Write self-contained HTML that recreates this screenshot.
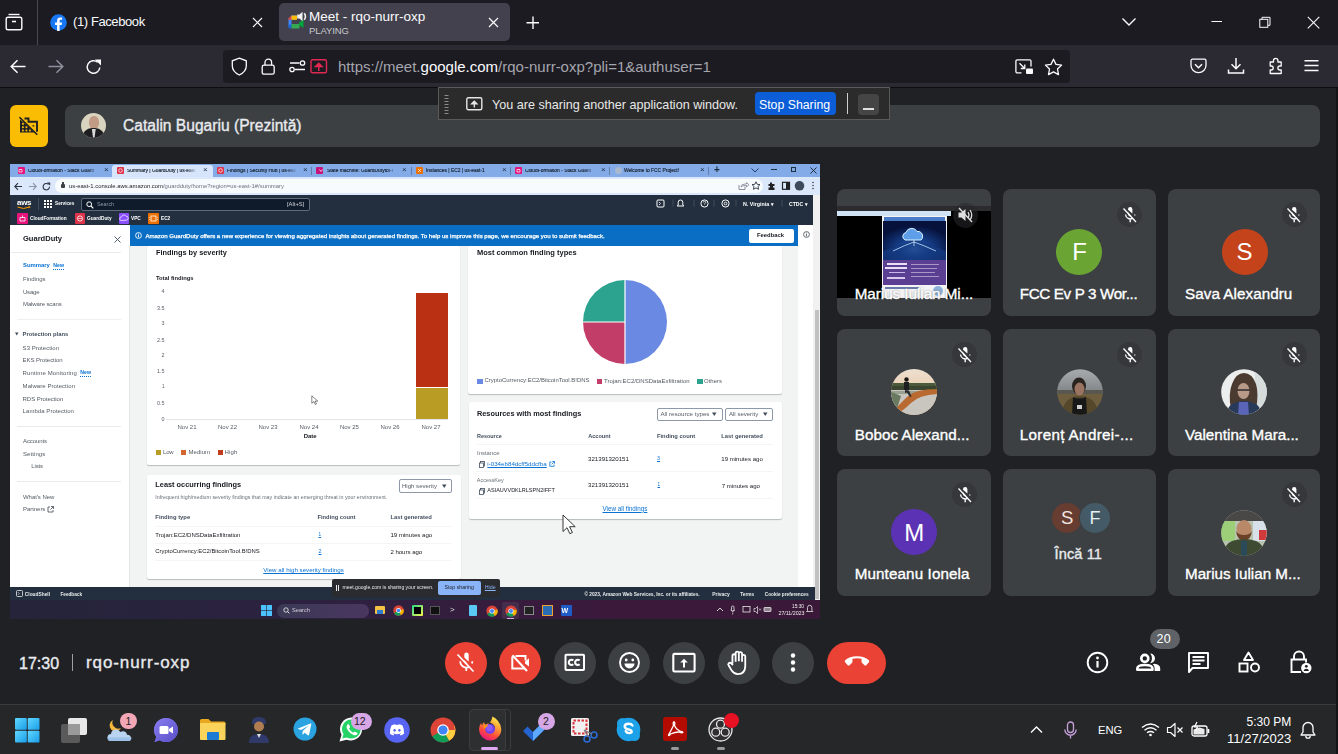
<!DOCTYPE html>
<html><head><meta charset="utf-8">
<style>
*{margin:0;padding:0;box-sizing:border-box}
html,body{width:1338px;height:754px;overflow:hidden;background:#202124;font-family:"Liberation Sans",sans-serif}
.a{position:absolute}
svg{position:absolute;overflow:visible}
/* firefox chrome */
#tabs{left:0;top:0;width:1338px;height:45px;background:#1c1b22}
#tb{left:0;top:45px;width:1338px;height:42px;background:#2b2a33}
#tbline{left:0;top:87px;width:1338px;height:1px;background:#0e0e10}
#url{left:223px;top:50px;width:847px;height:33px;background:#1c1b22;border-radius:4px}
/* meet */
#meet{left:0;top:88px;width:1338px;height:616px;background:#202124}
.tile{background:#3c4043;border-radius:8px}
#taskbar{left:0;top:704px;width:1338px;height:50px;background:#252729}

.t{position:absolute;white-space:nowrap;line-height:1}
.dk{color:#16191f}
.gy{color:#545b64}
.lk{color:#0972d3;text-decoration:underline}
.ctab{position:absolute;top:164px;height:13px}
</style></head><body>
<div id="tabs" class="a"></div>
<div id="tb" class="a"></div>
<div id="tbline" class="a"></div>
<div id="url" class="a"></div>
<div id="meet" class="a"></div>

<!-- FIREFOX CHROME -->
<svg style="left:0;top:0" width="40" height="45"><g fill="none" stroke="#fbfbfe" stroke-width="1.4"><rect x="6.2" y="17.2" width="15.6" height="12.6" rx="1.8"/><path d="M8.5 14.5h11"/><path d="M12 21.5h4" stroke-width="1.6"/></g></svg>
<div class="a" style="left:37px;top:0;width:1px;height:45px;background:#4a4950"></div>
<svg style="left:50px;top:14px" width="17" height="17"><circle cx="8.5" cy="8.5" r="8.3" fill="#1877f2"/><path d="M9.6 17V10.9h2.1l.35-2.5H9.6V6.9c0-.7.3-1.2 1.3-1.2h1.2V3.5c-.3 0-1-.1-1.9-.1-1.9 0-3.1 1.1-3.1 3.2v1.8H5.1v2.5h2v6.1z" fill="#fff"/></svg>
<div class="a" style="left:73px;top:14px;font-size:13px;letter-spacing:-0.4px;color:#fbfbfe;white-space:nowrap;line-height:16px">(1) Facebook</div>
<svg style="left:252px;top:17px" width="11" height="11"><path d="M1 1l9 9M10 1l-9 9" stroke="#fbfbfe" stroke-width="1.2"/></svg>
<div class="a" style="left:279px;top:3px;width:231px;height:38px;background:#42414d;border-radius:5px"></div>
<svg style="left:287px;top:11px" width="22" height="20"><path d="M1.5 7.5L4.5 4.5H9.5V8.8H4.5V16H1.5z" fill="#4285f4"/><path d="M1.5 7.5L4.5 4.5V8.8H1.5z" fill="#ea4335"/><rect x="4.5" y="4.5" width="5.5" height="4.3" fill="#fbbc04"/><path d="M1.5 13.5H4.5V17.5H3a1.5 1.5 0 0 1-1.5-1.5z" fill="#1967d2"/><rect x="4.5" y="13" width="8" height="4.5" fill="#34a853"/><path d="M12 11.5L16.5 8.5V17L12 14z" fill="#00a33a"/><path d="M10.2 3.5h2.3l3-2.8v9.5l-3-2.8h-2.3z" fill="#f2f2f4"/><path d="M17.2 2.2q2.5 3.2 0 6.5" stroke="#f2f2f4" stroke-width="1.6" fill="none"/></svg>
<div class="a" style="left:309px;top:9px;font-size:13.5px;color:#fbfbfe;white-space:nowrap;line-height:16px">Meet - rqo-nurr-oxp</div>
<div class="a" style="left:309px;top:26px;font-size:9.5px;color:#c8c8cc;white-space:nowrap;line-height:10px;letter-spacing:-0.1px">PLAYING</div>
<svg style="left:488px;top:17px" width="11" height="11"><path d="M1 1l9 9M10 1l-9 9" stroke="#fbfbfe" stroke-width="1.2"/></svg>
<svg style="left:525px;top:15px" width="16" height="16"><path d="M8 1.5v12.5M1.5 7.8h12.5" stroke="#fbfbfe" stroke-width="1.4"/></svg>
<svg style="left:1121px;top:16px" width="16" height="12"><path d="M1.5 2.5l6.5 6.5 6.5-6.5" stroke="#fbfbfe" stroke-width="1.4" fill="none"/></svg>
<svg style="left:1211px;top:17px" width="12" height="10"><path d="M0.5 4.5h10.5" stroke="#fbfbfe" stroke-width="1"/></svg>
<svg style="left:1259px;top:16px" width="13" height="13"><rect x="0.8" y="3.3" width="8" height="8" fill="none" stroke="#fbfbfe" stroke-width="1"/><path d="M3 3.3V1.3h8v8H8.8" fill="none" stroke="#fbfbfe" stroke-width="1"/></svg>
<svg style="left:1307px;top:16px" width="13" height="13"><path d="M0.8 0.8l11.5 11.5M12.3 0.8L0.8 12.3" stroke="#fbfbfe" stroke-width="1.1"/></svg>
<!-- toolbar -->
<svg style="left:9px;top:58px" width="18" height="17"><path d="M16.5 8.5H2.5M8.5 2.2L2.2 8.5l6.3 6.3" stroke="#fbfbfe" stroke-width="1.5" fill="none"/></svg>
<svg style="left:47px;top:58px" width="18" height="17"><path d="M1.5 8.5h14M9.5 2.2l6.3 6.3-6.3 6.3" stroke="#8f8f9d" stroke-width="1.5" fill="none"/></svg>
<svg style="left:85px;top:58px" width="18" height="18"><path d="M14.8 9.5A6.3 6.3 0 1 1 12.6 4.2" stroke="#fbfbfe" stroke-width="1.5" fill="none"/><path d="M10 1.5h6v6z" fill="#fbfbfe"/></svg>
<svg style="left:231px;top:57px" width="17" height="19"><path d="M8.3 1.2L15.3 3.8V9q0 5.5-7 9-7-3.5-7-9V3.8z" stroke="#fbfbfe" stroke-width="1.3" fill="none"/></svg>
<svg style="left:260px;top:57px" width="17" height="19"><rect x="2.2" y="8.2" width="12" height="9" rx="1.8" stroke="#fbfbfe" stroke-width="1.3" fill="none"/><path d="M5 8.2V5.5a3.3 3.3 0 0 1 6.6 0v2.7" stroke="#fbfbfe" stroke-width="1.3" fill="none"/></svg>
<svg style="left:289px;top:60px" width="18" height="13"><path d="M1 3h9.5M6 9.5H16" stroke="#fbfbfe" stroke-width="1.5"/><circle cx="13.5" cy="3" r="2.2" stroke="#fbfbfe" stroke-width="1.3" fill="none"/><circle cx="3" cy="9.5" r="2.2" stroke="#fbfbfe" stroke-width="1.3" fill="none"/></svg>
<svg style="left:310px;top:59px" width="18" height="15"><rect x="1" y="0.8" width="15.5" height="13" rx="1.6" stroke="#e22850" stroke-width="1.4" fill="none"/><path d="M8.75 12V5.5M5.5 7.5l3.25-3.2 3.25 3.2z" stroke="#e22850" stroke-width="1.5" fill="#e22850"/></svg>
<div class="a" style="left:338px;top:58px;font-size:15px;line-height:18px;color:#a5a5ad;white-space:nowrap">https://meet.<span style="color:#fbfbfe">google.com</span>/rqo-nurr-oxp?pli=1&amp;authuser=1</div>
<svg style="left:1015px;top:59px" width="19" height="16"><path d="M6.5 13.8H2.2a1.3 1.3 0 0 1-1.3-1.3V2.2A1.3 1.3 0 0 1 2.2.9h12.5a1.3 1.3 0 0 1 1.3 1.3V7.5" stroke="#fbfbfe" stroke-width="1.3" fill="none"/><path d="M4.5 4.2l5 5M9.8 5.5v4h-4" stroke="#fbfbfe" stroke-width="1.3" fill="none"/><rect x="11" y="9.5" width="7" height="5.5" rx="1" fill="#fbfbfe"/></svg>
<svg style="left:1044px;top:58px" width="19" height="17"><path d="M9.5 1.2l2.5 5.2 5.6.7-4.1 3.9 1 5.6-5-2.7-5 2.7 1-5.6-4.1-3.9 5.6-.7z" stroke="#fbfbfe" stroke-width="1.3" fill="none" stroke-linejoin="round"/></svg>
<svg style="left:1190px;top:58px" width="17" height="16"><path d="M2.5 1.2h12a1.5 1.5 0 0 1 1.5 1.5v4.5a7.5 7.5 0 0 1-15 0V2.7a1.5 1.5 0 0 1 1.5-1.5z" stroke="#fbfbfe" stroke-width="1.3" fill="none"/><path d="M5 6.2l3.5 3.5 3.5-3.5" stroke="#fbfbfe" stroke-width="1.5" fill="none"/></svg>
<svg style="left:1227px;top:57px" width="18" height="18"><path d="M9 1v10.5M4.5 7.2L9 11.7l4.5-4.5" stroke="#fbfbfe" stroke-width="1.5" fill="none"/><path d="M1.5 12.5v3.5h15v-3.5" stroke="#fbfbfe" stroke-width="1.5" fill="none"/></svg>
<svg style="left:1266px;top:57px" width="18" height="18"><path d="M7.5 3.5a2.2 2.2 0 0 1 4.4 0V5h3.3v4h-1.3a2 2 0 0 0 0 4h1.3v3.5H4.2v-3.5h1a2 2 0 0 0 0-4h-1V5h3.3z" stroke="#fbfbfe" stroke-width="1.3" fill="none" stroke-linejoin="round"/></svg>
<svg style="left:1304px;top:59px" width="15" height="14"><path d="M0.5 1.8h14M0.5 6.6h14M0.5 11.4h14" stroke="#fbfbfe" stroke-width="1.5"/></svg>

<!-- presenter bar -->
<div class="a" style="left:10px;top:105px;width:38px;height:42px;background:#fbbc04;border-radius:6px"></div>
<svg style="left:12px;top:108px" width="34" height="35"><path d="M8 11.5V24.5H23.5z" fill="#202124"/><g fill="#fbbc04"><rect x="10" y="15" width="1.8" height="1.8"/><rect x="10" y="18.3" width="1.8" height="1.8"/><rect x="10" y="21.6" width="1.8" height="1.8"/><rect x="13.5" y="18.3" width="1.8" height="1.8"/><rect x="13.5" y="21.6" width="1.8" height="1.8"/><rect x="17" y="21.6" width="1.8" height="1.8"/></g><path d="M12.5 10.5H16.5V13.8H25V23.8" stroke="#202124" stroke-width="1.9" fill="none"/><rect x="20.5" y="17.2" width="1.8" height="1.3" fill="#202124"/><path d="M8 9.5L25.5 26.5" stroke="#fbbc04" stroke-width="1.2"/><path d="M7.5 9.3L25.3 26.8" stroke="#202124" stroke-width="1.6"/></svg>
<div class="a tile" style="left:65px;top:105px;width:1255px;height:42px"></div>
<div class="a" style="left:81.3px;top:113px;width:25px;height:25px;border-radius:50%;overflow:hidden;background:#d9d4bf">
<div class="a" style="left:7.5px;top:3px;width:10px;height:13px;border-radius:45%;background:#c29b85"></div>
<div class="a" style="left:1px;top:15px;width:23px;height:14px;border-radius:10px 10px 0 0;background:#1e1e22"></div>
<div class="a" style="left:10.5px;top:15.5px;width:4px;height:9px;background:#d8d8d8;clip-path:polygon(0 0,100% 0,70% 100%,30% 100%)"></div>
</div>
<div class="a" style="left:123px;top:117px;font-size:15.6px;letter-spacing:0px;-webkit-text-stroke:0.35px #e8eaed;color:#e8eaed;white-space:nowrap;line-height:18px">Catalin Bugariu (Prezintă)</div>
<!-- sharing overlay -->
<div class="a" style="left:438px;top:87px;width:452px;height:33px;background:#2b2b2b;border:1px solid #5a5a5a"></div>
<svg style="left:444px;top:94px" width="6" height="22"><path d="M0.5 1.5h4M0.5 4.5h4M0.5 7.5h4M0.5 10.5h4M0.5 13.5h4M0.5 16.5h4M0.5 19.5h4" stroke="#8a8a8a" stroke-width="1"/></svg>
<svg style="left:466px;top:97px" width="17" height="14"><rect x="0.8" y="0.8" width="15" height="12" rx="1.5" stroke="#e6e6e6" stroke-width="1.4" fill="none"/><path d="M8.3 10.5V5M5.7 6.8l2.6-2.6 2.6 2.6z" stroke="#e6e6e6" stroke-width="1.3" fill="#e6e6e6"/></svg>
<div class="a" style="left:492px;top:97px;font-size:12.6px;color:#e8e8e8;white-space:nowrap;line-height:16px">You are sharing another application window.</div>
<div class="a" style="left:755px;top:92px;width:81px;height:23px;background:#0b5ed7;border-radius:4px"></div>
<div class="a" style="left:759px;top:97px;font-size:12.3px;color:#fff;white-space:nowrap;line-height:16px">Stop Sharing</div>
<div class="a" style="left:847px;top:93px;width:1px;height:21px;background:#d0d0d0"></div>
<div class="a" style="left:858px;top:94px;width:21px;height:21px;background:#454545;border-radius:4px"></div>
<div class="a" style="left:863px;top:108px;width:11px;height:2px;background:#e0e0e0"></div>
<div id="ssw" style="position:absolute;left:0;top:0;width:1338px;height:754px;filter:blur(0.25px)">
<!-- shared screen -->
<div class="a" style="left:10px;top:164px;width:810px;height:455px;background:#f2f3f3;overflow:hidden"></div>
<!-- chrome tab strip -->
<div class="a" style="left:10px;top:164px;width:810px;height:13px;background:#82abe8"></div>
<div class="a" style="left:112px;top:165px;width:101px;height:13px;background:#d6e5fb;border-radius:3px 3px 0 0"></div>
<div class="a" style="left:10px;top:177px;width:810px;height:18px;background:#dbe8fb"></div>
<div class="a" style="left:55px;top:179px;width:708px;height:14px;background:#f8fbfe;border-radius:7px"></div>
<!-- tabs -->
<div class="a" style="left:18px;top:167px;width:7px;height:7px;background:#e7157b;border-radius:1px"></div>
<div class="t dk" style="left:28px;top:169px;font-size:4.9px;color:#18212c;-webkit-text-stroke:0.15px #18212c;width:70px;overflow:hidden;-webkit-mask-image:linear-gradient(90deg,#000 85%,transparent)">CloudFormation - Stack Guard</div>
<div class="t" style="left:104px;top:166px;font-size:8px;color:#1f2d3d">×</div>
<div class="a" style="left:117px;top:167px;width:7px;height:7px;background:#dd344c;border-radius:1px"></div>
<div class="t dk" style="left:127px;top:169px;font-size:4.9px;color:#18212c;-webkit-text-stroke:0.15px #18212c;width:70px;overflow:hidden;-webkit-mask-image:linear-gradient(90deg,#000 85%,transparent)">Summary | GuardDuty | us-east</div>
<div class="t" style="left:203px;top:166px;font-size:8px;color:#1f2d3d">×</div>
<div class="a" style="left:217px;top:167px;width:7px;height:7px;background:#dd344c;border-radius:1px"></div>
<div class="t dk" style="left:227px;top:169px;font-size:4.9px;color:#18212c;-webkit-text-stroke:0.15px #18212c;width:70px;overflow:hidden;-webkit-mask-image:linear-gradient(90deg,#000 85%,transparent)">Findings | Security Hub | us-eas</div>
<div class="t" style="left:303px;top:166px;font-size:8px;color:#1f2d3d">×</div>
<div class="a" style="left:311px;top:167px;width:1px;height:8px;background:#5f7fa8"></div>
<div class="a" style="left:316px;top:167px;width:7px;height:7px;background:#c7137a;border-radius:1px"></div>
<div class="t dk" style="left:327px;top:169px;font-size:4.9px;color:#18212c;-webkit-text-stroke:0.15px #18212c;width:70px;overflow:hidden;-webkit-mask-image:linear-gradient(90deg,#000 85%,transparent)">State machine: GuardDutytoFi</div>
<div class="t" style="left:402px;top:166px;font-size:8px;color:#1f2d3d">×</div>
<div class="a" style="left:411px;top:167px;width:1px;height:8px;background:#5f7fa8"></div>
<div class="a" style="left:416px;top:167px;width:7px;height:7px;background:#ed7100;border-radius:1px"></div>
<div class="t dk" style="left:426px;top:169px;font-size:4.9px;color:#18212c;-webkit-text-stroke:0.15px #18212c">Instances | EC2 | us-east-1</div>
<div class="t" style="left:502px;top:166px;font-size:8px;color:#1f2d3d">×</div>
<div class="a" style="left:510px;top:167px;width:1px;height:8px;background:#5f7fa8"></div>
<div class="a" style="left:515px;top:167px;width:7px;height:7px;background:#e7157b;border-radius:1px"></div>
<div class="t dk" style="left:525px;top:169px;font-size:4.9px;color:#18212c;-webkit-text-stroke:0.15px #18212c;width:70px;overflow:hidden;-webkit-mask-image:linear-gradient(90deg,#000 85%,transparent)">CloudFormation - Stack Guard</div>
<div class="t" style="left:601px;top:166px;font-size:8px;color:#1f2d3d">×</div>
<div class="a" style="left:609px;top:167px;width:1px;height:8px;background:#5f7fa8"></div>
<div class="a" style="left:615px;top:167px;width:7px;height:7px;background:#a9b9cf;border-radius:50%"></div>
<div class="t dk" style="left:624px;top:169px;font-size:4.9px;color:#18212c;-webkit-text-stroke:0.15px #18212c">Welcome to FCC Project!</div>
<div class="t" style="left:700px;top:166px;font-size:8px;color:#1f2d3d">×</div>
<div class="a" style="left:708px;top:167px;width:1px;height:8px;background:#5f7fa8"></div>
<div class="t" style="left:714px;top:165px;font-size:10px;font-weight:bold;color:#1f2d3d">+</div>
<svg style="left:751px;top:168px" width="8" height="5"><path d="M0.5 0.5l3.5 3.5 3.5-3.5" stroke="#1f3a6a" stroke-width="1" fill="none"/></svg>
<div class="a" style="left:771px;top:169px;width:6px;height:1px;background:#1f2d3d"></div>
<div class="a" style="left:791px;top:167px;width:5px;height:5px;border:1px solid #1f2d3d"></div>
<svg style="left:810px;top:167px" width="7" height="7"><path d="M0.5 0.5l6 6M6.5 0.5l-6 6" stroke="#1f2d3d" stroke-width="1"/></svg>
<svg style="left:17px;top:167px" width="510" height="8"><g stroke="#fff" stroke-width="0.7" fill="none"><circle cx="103.5" cy="3.5" r="1.8"/><circle cx="203.5" cy="3.5" r="1.8"/><path d="M2 2.5h3v2.5H2zM500 2.5h3v2.5h-3z"/><path d="M302.5 2.5l1.5 2 1.5-2"/><path d="M401 2l3 3M404 2l-3 3"/></g></svg>
<!-- address row -->
<svg style="left:14px;top:182px" width="48" height="9"><path d="M1 4.5h7M4 1.2L0.8 4.5 4 7.8" stroke="#2b3443" stroke-width="1.1" fill="none"/><path d="M15 4.5h7M19 1.2l3.2 3.3L19 7.8" stroke="#8a94a6" stroke-width="1.1" fill="none"/><path d="M35.5 4.8a3.2 3.2 0 1 1-1-2.4" stroke="#2b3443" stroke-width="1.1" fill="none"/><path d="M33 0.5h3.2v3.2z" fill="#2b3443"/></svg>
<div class="a" style="left:61px;top:184px;width:4px;height:4px;background:#3c4043;border-radius:1px"></div>
<div class="a" style="left:62px;top:182px;width:2px;height:3px;border:1px solid #3c4043;border-bottom:none;border-radius:1px 1px 0 0"></div>
<div class="t" style="left:69px;top:184px;font-size:5.9px;color:#202124">us-east-1.console.aws.amazon.com<span style="color:#6b7280">/guardduty/home?region=us-east-1#/summary</span></div>
<svg style="left:738px;top:181px" width="30" height="10"><path d="M1 4v4.5h6V5.5" stroke="#7d8593" stroke-width="0.9" fill="none"/><path d="M3 6q0-3 4-3h1.5V1.5L11 3.8 8.5 6V4.5H7Q4.5 4.5 3 6z" fill="none" stroke="#7d8593" stroke-width="0.8"/><path d="M18 0.8l1.2 2.5 2.8.3-2 1.9.6 2.8-2.6-1.4-2.6 1.4.6-2.8-2-1.9 2.8-.3z" fill="none" stroke="#2b3443" stroke-width="0.9"/></svg>
<svg style="left:767px;top:181px" width="52" height="10"><path d="M3 1.5h2v1.5h2.5v2H6v1.5h1.5V9H1.5V6.5H3V5H1.5V3H3z" fill="#202124"/><rect x="15.5" y="1.3" width="7" height="7" stroke="#202124" stroke-width="1.2" fill="none"/><rect x="19" y="1.3" width="3.5" height="7" fill="#202124"/><circle cx="32.5" cy="4.8" r="4.8" fill="#3c4a5a"/><circle cx="46" cy="1.5" r="0.7" fill="#202124"/><circle cx="46" cy="4.5" r="0.7" fill="#202124"/><circle cx="46" cy="7.5" r="0.7" fill="#202124"/></svg>
<!-- aws nav -->
<div class="a" style="left:10px;top:195px;width:805px;height:30px;background:#232f3e"></div>
<div class="t" style="left:17px;top:199px;font-size:8px;font-weight:bold;color:#fff;letter-spacing:-0.3px">aws</div>
<svg style="left:17px;top:206px" width="14" height="4"><path d="M0.5 1q6 3 12 0" stroke="#ff9900" stroke-width="1" fill="none"/><path d="M11.5 0.3l1.6.6-.8 1.3" stroke="#ff9900" stroke-width="0.8" fill="none"/></svg>
<div class="a" style="left:38px;top:198px;width:1px;height:12px;background:#414d5c"></div>
<svg style="left:44px;top:200px" width="8" height="8"><g fill="#fff"><rect x="0" y="0" width="2" height="2"/><rect x="3" y="0" width="2" height="2"/><rect x="6" y="0" width="2" height="2"/><rect x="0" y="3" width="2" height="2"/><rect x="3" y="3" width="2" height="2"/><rect x="6" y="3" width="2" height="2"/><rect x="0" y="6" width="2" height="2"/><rect x="3" y="6" width="2" height="2"/><rect x="6" y="6" width="2" height="2"/></g></svg>
<div class="t" style="left:55px;top:202px;font-size:4.7px;font-weight:bold;color:#fff">Services</div>
<div class="a" style="left:81px;top:198px;width:229px;height:13px;background:#0f1b2a;border:1px solid #5f6b7a;border-radius:2px"></div>
<svg style="left:86px;top:201px" width="8" height="8"><circle cx="3.2" cy="3.2" r="2.4" stroke="#fff" stroke-width="1" fill="none"/><path d="M5 5l2.3 2.3" stroke="#fff" stroke-width="1.1"/></svg>
<div class="t" style="left:97px;top:202px;font-size:5.4px;color:#8d99a8">Search</div>
<div class="t" style="left:287px;top:202px;font-size:5.8px;color:#d1d5db">[Alt+S]</div>
<svg style="left:656px;top:198px" width="160" height="12"><rect x="1" y="2" width="7" height="7" rx="1" stroke="#fff" stroke-width="1" fill="none"/><path d="M3 4l1.5 1.5L3 7" stroke="#fff" stroke-width="0.8" fill="none"/><path d="M17 1.5v7M38 1.5v7M58 1.5v7M80 1.5v7M126 1.5v7" stroke="#414d5c" stroke-width="1"/><path d="M24.5 2a2.3 2.3 0 0 1 2.3 2.3V7l1 1h-6.6l1-1V4.3A2.3 2.3 0 0 1 24.5 2z" stroke="#fff" stroke-width="1" fill="none"/><circle cx="48.5" cy="5.5" r="3.6" stroke="#fff" stroke-width="1" fill="none"/><path d="M47.3 4.5q0-1.2 1.2-1.2t1.2 1.1q0 .8-1.1 1.3v.8" stroke="#fff" stroke-width="0.8" fill="none"/><circle cx="69.5" cy="5.5" r="3.6" stroke="#fff" stroke-width="1" fill="none"/><circle cx="69.5" cy="5.5" r="1.4" stroke="#fff" stroke-width="0.9" fill="none"/></svg>
<div class="t" style="left:743px;top:202px;font-size:5.3px;font-weight:bold;color:#fff">N. Virginia ▾</div>
<div class="t" style="left:789px;top:202px;font-size:5.1px;font-weight:bold;color:#fff">CTDC ▾</div>
<!-- favorites -->
<div class="a" style="left:17px;top:213px;width:11px;height:11px;background:#e7157b;border-radius:1px"></div>
<div class="t" style="left:30px;top:217px;font-size:4.75px;font-weight:bold;color:#fff">CloudFormation</div>
<div class="a" style="left:75px;top:213px;width:10px;height:11px;background:#dd344c;border-radius:1px"></div>
<div class="t" style="left:87px;top:217px;font-size:4.75px;font-weight:bold;color:#fff">GuardDuty</div>
<div class="a" style="left:119px;top:213px;width:10px;height:11px;background:#8c4fff;border-radius:1px"></div>
<div class="t" style="left:131px;top:217px;font-size:4.75px;font-weight:bold;color:#fff">VPC</div>
<div class="a" style="left:148px;top:213px;width:11px;height:11px;background:#ed7100;border-radius:1px"></div>
<div class="t" style="left:161px;top:217px;font-size:4.75px;font-weight:bold;color:#fff">EC2</div>
<svg style="left:17px;top:213px" width="160" height="11"><path d="M3 4.5h5v3.5H3z" stroke="#fff" stroke-width="0.8" fill="none"/><path d="M5.5 2.5v2" stroke="#fff" stroke-width="0.8"/><circle cx="63" cy="5.5" r="2.6" stroke="#fff" stroke-width="0.8" fill="none"/><path d="M61 5.5h4" stroke="#fff" stroke-width="0.6"/><path d="M104.5 7.5a1.8 1.8 0 0 1 0-3.6 2.5 2.5 0 0 1 4.6-.6 1.9 1.9 0 0 1 .5 3.8z" stroke="#fff" stroke-width="0.7" fill="none"/><rect x="134" y="3" width="5" height="5" stroke="#fff" stroke-width="0.8" fill="none"/><path d="M133 4.5h-1M133 6.5h-1M140 4.5h1M140 6.5h1" stroke="#fff" stroke-width="0.6"/></svg>
<!-- scrollbar right -->
<div class="a" style="left:813px;top:195px;width:7px;height:405px;background:#f1f1f1"></div>
<div class="a" style="left:815px;top:310px;width:4px;height:289px;background:#c1c1c1"></div>
<div class="a" style="left:798px;top:225px;width:15px;height:362px;background:#ffffff"></div>
<!-- sidebar -->
<div class="a" style="left:10px;top:225px;width:120px;height:362px;background:#fff"></div>
<div class="a" style="left:129px;top:246px;width:1px;height:341px;background:#e4e6e8"></div>
<!-- banner -->
<div class="a" style="left:130px;top:225px;width:668px;height:21px;background:#0a6fc4"></div>
<!-- aws footer -->
<div class="a" style="left:10px;top:587px;width:805px;height:13px;background:#232f3e"></div>
<!-- remote taskbar -->
<div class="a" style="left:10px;top:600px;width:810px;height:19px;background:linear-gradient(90deg,#24243a 0%,#2c2240 35%,#3a1a3c 70%,#3a1838 100%)"></div>
<!-- SSCONTENT -->

<!-- sidebar extras -->
<svg style="left:114px;top:236px" width="7" height="7"><path d="M0.5 0.5l6 6M6.5 0.5l-6 6" stroke="#414d5c" stroke-width="0.9"/></svg>
<div class="a" style="left:11px;top:252px;width:110px;height:1px;background:#e9ebed"></div>
<svg style="left:15px;top:332px" width="4" height="4"><path d="M0 0.5h3.5L1.75 3.5z" fill="#414d5c"/></svg>
<div class="a" style="left:17px;top:426px;width:104px;height:1px;background:#e9ebed"></div>
<div class="a" style="left:17px;top:319px;width:104px;height:1px;background:#eef0f1"></div>
<div class="a" style="left:17px;top:481px;width:104px;height:1px;background:#e9ebed"></div>
<svg style="left:47px;top:506px" width="7" height="7"><path d="M3 1H1v5h5V4" stroke="#545b64" stroke-width="0.9" fill="none"/><path d="M4 0.5h2.5V3M6.5 0.5L3.5 3.5" stroke="#545b64" stroke-width="0.9" fill="none"/></svg>
<!-- banner extras -->
<svg style="left:135px;top:232px" width="7" height="7"><circle cx="3.5" cy="3.5" r="2.9" stroke="#fff" stroke-width="0.9" fill="none"/><path d="M3.5 3v2.3" stroke="#fff" stroke-width="0.9"/><circle cx="3.5" cy="1.9" r="0.5" fill="#fff"/></svg>
<div class="a" style="left:749px;top:229px;width:44.5px;height:13.5px;background:#fff;border-radius:2px"></div>
<svg style="left:803px;top:231px" width="7" height="7"><circle cx="3.5" cy="3.5" r="2.9" stroke="#545b64" stroke-width="0.9" fill="none"/><path d="M3.5 3v2.3" stroke="#545b64" stroke-width="0.9"/><circle cx="3.5" cy="1.9" r="0.5" fill="#545b64"/></svg>
<!-- cards -->
<div class="a" style="left:146.5px;top:246px;width:313.5px;height:219px;background:#fff;box-shadow:0 1px 1px rgba(0,28,36,0.25);border-radius:2px"></div>
<div class="a" style="left:468px;top:246px;width:313.5px;height:148px;background:#fff;box-shadow:0 1px 1px rgba(0,28,36,0.25);border-radius:2px"></div>
<div class="a" style="left:469px;top:401.5px;width:312.5px;height:117px;background:#fff;box-shadow:0 1px 1px rgba(0,28,36,0.25);border-radius:2px"></div>
<div class="a" style="left:146.5px;top:475px;width:314px;height:104px;background:#fff;box-shadow:0 1px 1px rgba(0,28,36,0.25);border-radius:2px"></div>
<!-- chart -->
<div class="a" style="left:166px;top:419px;width:282px;height:1px;background:#e3e6e8"></div>
<div class="a" style="left:416px;top:292.5px;width:31.5px;height:94.5px;background:#ba3012"></div>
<div class="a" style="left:416px;top:388px;width:31.5px;height:31px;background:#b99c24"></div>
<div class="a" style="left:156px;top:449.5px;width:5px;height:5px;background:#b99c24"></div>
<div class="a" style="left:181px;top:449.5px;width:5px;height:5px;background:#d4662f"></div>
<div class="a" style="left:218px;top:449.5px;width:5px;height:5px;background:#c23b1c"></div>
<svg style="left:311px;top:395px" width="8" height="10"><path d="M0.8 0.8v7.5l2-1.8 1.5 3 1.2-.6-1.4-2.8h2.7z" fill="#fff" stroke="#333" stroke-width="0.6"/></svg>
<!-- pie -->
<svg style="left:583px;top:280px" width="84" height="84"><path d="M42 42V0A42 42 0 0 1 42 84z" fill="#6a89e3"/><path d="M42 42V84A42 42 0 0 1 0 42z" fill="#c33d69"/><path d="M42 42H0A42 42 0 0 1 42 0z" fill="#2ba38f"/><path d="M42 0v84M0 42h42" stroke="#fff" stroke-width="1.2"/></svg>
<div class="a" style="left:477px;top:378.5px;width:5.5px;height:5.5px;background:#6a89e3"></div>
<div class="a" style="left:596.5px;top:378.5px;width:5.5px;height:5.5px;background:#c33d69"></div>
<div class="a" style="left:697px;top:378.5px;width:5.5px;height:5.5px;background:#2ba38f"></div>
<!-- card3 extras -->
<div class="a" style="left:657px;top:407.5px;width:65.5px;height:13.5px;border:1px solid #8d99a8;border-radius:2px;background:#fff"></div>
<div class="a" style="left:725px;top:407.5px;width:48px;height:13.5px;border:1px solid #8d99a8;border-radius:2px;background:#fff"></div>
<svg style="left:712px;top:412px" width="5" height="5"><path d="M0 0.5h4.5L2.25 4z" fill="#414d5c"/></svg>
<svg style="left:763px;top:412px" width="5" height="5"><path d="M0 0.5h4.5L2.25 4z" fill="#414d5c"/></svg>
<div class="a" style="left:477px;top:444px;width:296px;height:1px;background:#f4f5f5"></div>
<div class="a" style="left:477px;top:471px;width:296px;height:1px;background:#f4f5f5"></div>
<div class="a" style="left:477px;top:498px;width:296px;height:1px;background:#f4f5f5"></div>
<svg style="left:479px;top:460.5px" width="6" height="7"><rect x="1.5" y="0.5" width="4" height="4.5" stroke="#414d5c" stroke-width="0.8" fill="none"/><rect x="0.5" y="2" width="4" height="4.5" stroke="#414d5c" stroke-width="0.8" fill="#fff"/></svg>
<svg style="left:548.5px;top:460.5px" width="6" height="6"><path d="M2.5 1H0.8v4.3h4.3V3.5" stroke="#0972d3" stroke-width="0.8" fill="none"/><path d="M3.3 0.5h2.2v2.2M5.5 0.5L2.7 3.3" stroke="#0972d3" stroke-width="0.8" fill="none"/></svg>
<svg style="left:479px;top:487.5px" width="6" height="7"><rect x="1.5" y="0.5" width="4" height="4.5" stroke="#414d5c" stroke-width="0.8" fill="none"/><rect x="0.5" y="2" width="4" height="4.5" stroke="#414d5c" stroke-width="0.8" fill="#fff"/></svg>
<!-- card4 extras -->
<div class="a" style="left:398.5px;top:479px;width:53px;height:13.5px;border:1px solid #8d99a8;border-radius:2px;background:#fff"></div>
<svg style="left:442px;top:483.5px" width="5" height="5"><path d="M0 0.5h4.5L2.25 4z" fill="#414d5c"/></svg>
<div class="a" style="left:155px;top:526px;width:297px;height:1px;background:#f4f5f5"></div>
<div class="a" style="left:155px;top:543px;width:297px;height:1px;background:#f4f5f5"></div>
<div class="a" style="left:155px;top:560px;width:297px;height:1px;background:#f4f5f5"></div>

<svg style="left:16px;top:590px" width="7" height="7"><rect x="0.5" y="0.5" width="6" height="6" rx="1" stroke="#e9ebed" stroke-width="0.8" fill="none"/><path d="M2 2.2l1.3 1.3L2 4.8" stroke="#e9ebed" stroke-width="0.7" fill="none"/></svg>

<div class="a" style="left:332px;top:578.5px;width:168px;height:18.5px;background:#2a2b2f;border-radius:2px"></div>
<div class="a" style="left:336px;top:584.5px;width:1px;height:6px;background:#e8eaed"></div>
<div class="a" style="left:338px;top:584.5px;width:1px;height:6px;background:#e8eaed"></div>
<div class="a" style="left:437.7px;top:581px;width:43px;height:13.7px;background:#8ab4f8;border-radius:2px"></div>
<svg style="left:261px;top:605px" width="11" height="11"><g fill="#4cc2ff"><rect x="0" y="0" width="5.2" height="5.2"/><rect x="5.8" y="0" width="5.2" height="5.2"/><rect x="0" y="5.8" width="5.2" height="5.2"/><rect x="5.8" y="5.8" width="5.2" height="5.2"/></g></svg>
<div class="a" style="left:277px;top:604px;width:92px;height:13.5px;border-radius:7px;background:linear-gradient(90deg,#3b3a55,#4a3660)"></div>
<svg style="left:283px;top:607px" width="7" height="7"><circle cx="3" cy="3" r="2.2" stroke="#e0e0e0" stroke-width="0.9" fill="none"/><path d="M4.6 4.6l1.8 1.8" stroke="#e0e0e0" stroke-width="1"/></svg>
<div class="a" style="left:375px;top:606px;width:10px;height:8px;background:#f5c243;border-radius:1px"></div>
<div class="a" style="left:377px;top:610px;width:6px;height:4px;background:#2e7ad1"></div>
<svg style="left:393px;top:605px" width="11" height="11"><circle cx="5.5" cy="5.5" r="5.2" fill="#db4437"/><path d="M5.5 5.5L1 8.2A5.2 5.2 0 0 0 8.1 10z" fill="#0f9d58"/><path d="M5.5 5.5L10.6 4.2A5.2 5.2 0 0 1 8.1 10z" fill="#f4b400"/><circle cx="5.5" cy="5.5" r="2.4" fill="#fff"/><circle cx="5.5" cy="5.5" r="1.8" fill="#4285f4"/></svg>
<div class="a" style="left:412px;top:605px;width:11px;height:11px;background:linear-gradient(135deg,#21d789,#fcf84a);border-radius:1px"></div>
<div class="a" style="left:414px;top:607px;width:7px;height:7px;background:#000"></div>
<div class="a" style="left:430px;top:606px;width:10px;height:9px;background:#111;border:1px solid #555"></div>
<div class="t" style="left:450px;top:606px;font-size:8px;color:#e0e0e0">&gt;</div>
<div class="a" style="left:469px;top:605px;width:8px;height:11px;background:#5ac8f5;border-radius:1px"></div>
<svg style="left:486px;top:604.5px" width="12" height="12"><circle cx="6" cy="6" r="5.6" fill="#db4437"/><path d="M6 6L1.1 8.9A5.6 5.6 0 0 0 8.8 10.9z" fill="#0f9d58"/><path d="M6 6L11.5 4.5A5.6 5.6 0 0 1 8.8 10.9z" fill="#f4b400"/><circle cx="6" cy="6" r="2.6" fill="#fff"/><circle cx="6" cy="6" r="2" fill="#4285f4"/></svg>
<div class="a" style="left:502px;top:602px;width:17px;height:17px;background:rgba(255,255,255,0.08);border-radius:2px"></div>
<svg style="left:505px;top:604.5px" width="12" height="12"><circle cx="6" cy="6" r="5.6" fill="#db4437"/><path d="M6 6L1.1 8.9A5.6 5.6 0 0 0 8.8 10.9z" fill="#0f9d58"/><path d="M6 6L11.5 4.5A5.6 5.6 0 0 1 8.8 10.9z" fill="#f4b400"/><circle cx="6" cy="6" r="2.6" fill="#fff"/><circle cx="6" cy="6" r="2" fill="#4285f4"/></svg>
<div class="a" style="left:507px;top:617.5px;width:7px;height:1px;background:#d8a8e8"></div>
<div class="a" style="left:524px;top:605.5px;width:10px;height:9px;background:#222;border:1px solid #888"></div>
<div class="a" style="left:542px;top:605px;width:11px;height:11px;border:1.5px solid #f0a030;background:#2a6db5"></div>
<div class="a" style="left:561px;top:605px;width:11px;height:11px;background:#1e5bc6;border-radius:1px"></div>
<div class="t" style="left:561.5px;top:607px;font-size:7px;font-weight:bold;color:#fff">W</div>
<svg style="left:716px;top:604px" width="100" height="12"><path d="M1 7l3-3 3 3" stroke="#e8e8e8" stroke-width="0.9" fill="none"/><rect x="15.5" y="2" width="2.5" height="5" rx="1.2" stroke="#e8e8e8" stroke-width="0.8" fill="none"/><path d="M14.5 6q2.3 3 4.5 0M16.7 8.5v2" stroke="#e8e8e8" stroke-width="0.7" fill="none"/><rect x="27" y="2.5" width="7" height="5.5" stroke="#e8e8e8" stroke-width="0.8" fill="none"/><path d="M38 4.5h1.5l2-2v7l-2-2H38z" stroke="#e8e8e8" stroke-width="0.7" fill="none"/><path d="M43 4.5l2 2M45 4.5l-2 2" stroke="#e8e8e8" stroke-width="0.6"/><rect x="48" y="3.5" width="7" height="4" rx="0.5" stroke="#e8e8e8" stroke-width="0.8" fill="#e8e8e8" fill-opacity="0.5"/><path d="M91.5 3.5a2.2 2.2 0 0 1 4.4 0v3l1 1h-6.4l1-1z" stroke="#e8e8e8" stroke-width="0.8" fill="none"/></svg>
<div class="t" style="left:23.0px;top:235.2px;font-size:7.55px;font-weight:bold;color:#16191f;">GuardDuty</div>
<div class="t" style="left:23.0px;top:262.7px;font-size:5.90px;font-weight:bold;color:#0972d3;">Summary</div>
<div class="t" style="left:53.3px;top:263.1px;font-size:5.20px;font-weight:bold;color:#0972d3;border-bottom:1px dotted #0972d3;padding-bottom:0.5px;">New</div>
<div class="t" style="left:23.0px;top:275.5px;font-size:6.00px;letter-spacing:-0.02px;color:#545b64;">Findings</div>
<div class="t" style="left:23.0px;top:288.5px;font-size:6.00px;letter-spacing:-0.21px;color:#545b64;">Usage</div>
<div class="t" style="left:23.0px;top:301.0px;font-size:6.00px;letter-spacing:-0.11px;color:#545b64;">Malware scans</div>
<div class="t" style="left:22.6px;top:331.6px;font-size:5.83px;font-weight:bold;color:#414d5c;">Protection plans</div>
<div class="t" style="left:22.6px;top:344.5px;font-size:6.00px;letter-spacing:0.03px;color:#545b64;">S3 Protection</div>
<div class="t" style="left:22.6px;top:357.2px;font-size:6.00px;letter-spacing:-0.05px;color:#545b64;">EKS Protection</div>
<div class="t" style="left:22.6px;top:370.0px;font-size:6.00px;letter-spacing:0.13px;color:#545b64;">Runtime Monitoring</div>
<div class="t" style="left:80.3px;top:370.4px;font-size:5.16px;font-weight:bold;color:#0972d3;border-bottom:1px dotted #0972d3;padding-bottom:0.5px;">New</div>
<div class="t" style="left:22.6px;top:382.8px;font-size:6.00px;letter-spacing:0.06px;color:#545b64;">Malware Protection</div>
<div class="t" style="left:22.6px;top:395.6px;font-size:6.00px;letter-spacing:-0.06px;color:#545b64;">RDS Protection</div>
<div class="t" style="left:22.6px;top:408.0px;font-size:6.00px;letter-spacing:0.06px;color:#545b64;">Lambda Protection</div>
<div class="t" style="left:23.0px;top:438.0px;font-size:6.00px;letter-spacing:-0.08px;color:#545b64;">Accounts</div>
<div class="t" style="left:23.0px;top:450.6px;font-size:6.00px;letter-spacing:0.08px;color:#545b64;">Settings</div>
<div class="t" style="left:31.2px;top:463.4px;font-size:6.00px;letter-spacing:-0.11px;color:#545b64;">Lists</div>
<div class="t" style="left:23.0px;top:493.6px;font-size:6.00px;letter-spacing:-0.06px;color:#545b64;">What's New</div>
<div class="t" style="left:23.0px;top:506.3px;font-size:6.00px;letter-spacing:-0.05px;color:#545b64;">Partners</div>
<div class="t" style="left:145.4px;top:232.6px;font-size:6.05px;color:#ffffff;-webkit-text-stroke:0.25px #fff;">Amazon GuardDuty offers a new experience for viewing aggregated insights about generated findings. To help us improve this page, we encourage you to submit feedback.</div>
<div class="t" style="left:757.0px;top:232.8px;font-size:5.85px;font-weight:bold;color:#16191f;">Feedback</div>
<div class="t" style="left:155.9px;top:249.3px;font-size:7.35px;font-weight:bold;color:#16191f;">Findings by severity</div>
<div class="t" style="left:155.9px;top:276.4px;font-size:5.80px;font-weight:bold;color:#16191f;">Total findings</div>
<div class="t" style="left:161.5px;top:289.3px;font-size:5.39px;color:#545b64;">4</div>
<div class="t" style="left:157.0px;top:305.6px;font-size:5.40px;color:#545b64;">3.5</div>
<div class="t" style="left:161.5px;top:321.3px;font-size:5.39px;color:#545b64;">3</div>
<div class="t" style="left:157.0px;top:337.5px;font-size:5.40px;color:#545b64;">2.5</div>
<div class="t" style="left:161.5px;top:353.0px;font-size:5.39px;color:#545b64;">2</div>
<div class="t" style="left:157.0px;top:369.2px;font-size:5.40px;color:#545b64;">1.5</div>
<div class="t" style="left:161.9px;top:385.3px;font-size:4.67px;color:#545b64;">1</div>
<div class="t" style="left:157.0px;top:400.9px;font-size:5.40px;color:#545b64;">0.5</div>
<div class="t" style="left:161.5px;top:416.6px;font-size:5.39px;color:#545b64;">0</div>
<div class="t" style="left:177.5px;top:424.1px;font-size:6.00px;color:#545b64;">Nov 21</div>
<div class="t" style="left:218.0px;top:424.1px;font-size:6.00px;color:#545b64;">Nov 22</div>
<div class="t" style="left:258.5px;top:424.1px;font-size:6.00px;color:#545b64;">Nov 23</div>
<div class="t" style="left:299.5px;top:424.1px;font-size:6.00px;color:#545b64;">Nov 24</div>
<div class="t" style="left:339.9px;top:424.1px;font-size:6.00px;color:#545b64;">Nov 25</div>
<div class="t" style="left:380.5px;top:424.1px;font-size:6.00px;color:#545b64;">Nov 26</div>
<div class="t" style="left:421.5px;top:424.1px;font-size:6.00px;color:#545b64;">Nov 27</div>
<div class="t" style="left:303.7px;top:433.0px;font-size:6.00px;font-weight:bold;color:#16191f;">Date</div>
<div class="t" style="left:163.0px;top:449.0px;font-size:6.00px;letter-spacing:-0.20px;color:#545b64;">Low</div>
<div class="t" style="left:188.6px;top:449.0px;font-size:6.00px;letter-spacing:0.01px;color:#545b64;">Medium</div>
<div class="t" style="left:224.4px;top:449.0px;font-size:6.00px;letter-spacing:0.19px;color:#545b64;">High</div>
<div class="t" style="left:477.0px;top:249.2px;font-size:7.51px;font-weight:bold;color:#16191f;">Most common finding types</div>
<div class="t" style="left:484.5px;top:378.0px;font-size:5.95px;color:#545b64;">CryptoCurrency:EC2/BitcoinTool.B!DNS</div>
<div class="t" style="left:604.0px;top:378.0px;font-size:6.04px;color:#545b64;">Trojan:EC2/DNSDataExfiltration</div>
<div class="t" style="left:704.0px;top:378.0px;font-size:6.00px;color:#545b64;">Others</div>
<div class="t" style="left:477.0px;top:409.9px;font-size:7.34px;font-weight:bold;color:#16191f;">Resources with most findings</div>
<div class="t" style="left:660.5px;top:411.2px;font-size:6.17px;color:#545b64;">All resource types</div>
<div class="t" style="left:729.0px;top:411.3px;font-size:6.04px;color:#545b64;">All severity</div>
<div class="t" style="left:477.0px;top:433.9px;font-size:5.44px;font-weight:bold;color:#414d5c;">Resource</div>
<div class="t" style="left:588.2px;top:433.8px;font-size:5.60px;font-weight:bold;color:#414d5c;">Account</div>
<div class="t" style="left:657.0px;top:433.7px;font-size:5.78px;font-weight:bold;color:#414d5c;">Finding count</div>
<div class="t" style="left:721.3px;top:433.7px;font-size:5.83px;font-weight:bold;color:#414d5c;">Last generated</div>
<div class="t" style="left:477.0px;top:450.2px;font-size:5.98px;color:#687078;">Instance</div>
<div class="t" style="left:487.3px;top:460.5px;font-size:6.19px;color:#0972d3;text-decoration:underline;">i-034eb84dcff5ddcfba</div>
<div class="t" style="left:588.0px;top:455.6px;font-size:6.14px;color:#16191f;">321391320151</div>
<div class="t" style="left:657.0px;top:456.0px;font-size:5.39px;color:#0972d3;text-decoration:underline;">3</div>
<div class="t" style="left:721.3px;top:455.7px;font-size:6.07px;color:#16191f;">19 minutes ago</div>
<div class="t" style="left:476.8px;top:478.0px;font-size:5.46px;color:#687078;">AccessKey</div>
<div class="t" style="left:487.3px;top:487.8px;font-size:5.50px;color:#16191f;">ASIAUVVDKLRLSPN2IFFT</div>
<div class="t" style="left:588.0px;top:482.4px;font-size:6.14px;color:#16191f;">321391320151</div>
<div class="t" style="left:657.5px;top:483.2px;font-size:4.67px;color:#0972d3;text-decoration:underline;">1</div>
<div class="t" style="left:721.8px;top:482.5px;font-size:6.08px;color:#16191f;">7 minutes ago</div>
<div class="t" style="left:602.5px;top:505.6px;font-size:6.28px;color:#0972d3;text-decoration:underline;">View all findings</div>
<div class="t" style="left:155.3px;top:481.1px;font-size:7.36px;font-weight:bold;color:#16191f;">Least occurring findings</div>
<div class="t" style="left:402.0px;top:482.7px;font-size:6.06px;color:#545b64;">High severity</div>
<div class="t" style="left:155.3px;top:494.8px;font-size:5.31px;color:#687078;">Infrequent high/medium severity findings that may indicate an emerging threat in your environment.</div>
<div class="t" style="left:155.3px;top:515.0px;font-size:5.89px;font-weight:bold;color:#414d5c;">Finding type</div>
<div class="t" style="left:317.5px;top:515.0px;font-size:5.76px;font-weight:bold;color:#414d5c;">Finding count</div>
<div class="t" style="left:390.4px;top:515.0px;font-size:5.82px;font-weight:bold;color:#414d5c;">Last generated</div>
<div class="t" style="left:155.3px;top:531.9px;font-size:6.00px;color:#16191f;">Trojan:EC2/DNSDataExfiltration</div>
<div class="t" style="left:318.5px;top:532.6px;font-size:4.67px;color:#0972d3;text-decoration:underline;">1</div>
<div class="t" style="left:390.4px;top:531.8px;font-size:6.13px;color:#16191f;">19 minutes ago</div>
<div class="t" style="left:155.3px;top:548.9px;font-size:5.92px;color:#16191f;">CryptoCurrency:EC2/BitcoinTool.B!DNS</div>
<div class="t" style="left:318.5px;top:549.2px;font-size:5.39px;color:#0972d3;text-decoration:underline;">2</div>
<div class="t" style="left:390.4px;top:548.9px;font-size:6.02px;color:#16191f;">2 hours ago</div>
<div class="t" style="left:263.3px;top:566.9px;font-size:6.18px;color:#0972d3;text-decoration:underline;">View all high severity findings</div>
<div class="t" style="left:24.8px;top:592.6px;font-size:4.83px;font-weight:bold;color:#e9ebed;">CloudShell</div>
<div class="t" style="left:60.5px;top:592.7px;font-size:4.66px;font-weight:bold;color:#e9ebed;">Feedback</div>
<div class="t" style="left:584.4px;top:592.6px;font-size:4.81px;font-weight:bold;color:#e9ebed;">© 2023, Amazon Web Services, Inc. or its affiliates.</div>
<div class="t" style="left:712.3px;top:592.5px;font-size:4.92px;font-weight:bold;color:#e9ebed;">Privacy</div>
<div class="t" style="left:740.3px;top:592.6px;font-size:4.75px;font-weight:bold;color:#e9ebed;">Terms</div>
<div class="t" style="left:764.8px;top:592.6px;font-size:4.73px;font-weight:bold;color:#e9ebed;">Cookie preferences</div>
<div class="t" style="left:342.5px;top:585.3px;font-size:5.06px;color:#e8eaed;">meet.google.com is sharing your screen.</div>
<div class="t" style="left:444.5px;top:585.3px;font-size:5.22px;color:#202124;">Stop sharing</div>
<div class="t" style="left:484.8px;top:585.3px;font-size:5.30px;color:#8ab4f8;text-decoration:underline;">Hide</div>
<div class="t" style="left:292.0px;top:607.8px;font-size:5.68px;color:#d6d0de;">Search</div>
<div class="t" style="left:792.0px;top:604.6px;font-size:4.80px;color:#f0f0f0;">15:30</div>
<div class="t" style="left:778.5px;top:611.0px;font-size:5.27px;color:#f0f0f0;">27/11/2023</div>
<svg style="left:562px;top:514px" width="15" height="21"><path d="M1 1v16.5l4-3.8 2.8 6 2.6-1.2-2.8-5.8h5.6z" fill="#fff" stroke="#222" stroke-width="0.9" stroke-linejoin="round"/></svg>

<!-- /SSCONTENT -->
<!-- REMOTETB -->
</div>
<!-- tiles -->
<div class="a tile" style="left:837px;top:189px;width:154px;height:127px"></div>
<div class="a tile" style="left:1003px;top:189px;width:153px;height:127px"></div>
<div class="a tile" style="left:1168px;top:189px;width:152px;height:127px"></div>
<div class="a tile" style="left:837px;top:329px;width:154px;height:127px"></div>
<div class="a tile" style="left:1003px;top:329px;width:153px;height:127px"></div>
<div class="a tile" style="left:1168px;top:329px;width:152px;height:127px"></div>
<div class="a tile" style="left:837px;top:469px;width:154px;height:127px"></div>
<div class="a tile" style="left:1003px;top:469px;width:153px;height:127px"></div>
<div class="a tile" style="left:1168px;top:469px;width:152px;height:127px"></div>
<!-- TILECONTENT -->
<div class="a" style="left:837px;top:206px;width:154px;height:92px;background:#000;overflow:hidden;filter:blur(0.3px)">
<div class="a" style="left:0;top:0;width:154px;height:4.5px;background:#2c2c2e"></div>
<div class="a" style="left:0;top:4.5px;width:114px;height:5px;background:#d0e3f4"></div>
<div class="a" style="left:45px;top:9.5px;width:65px;height:83px;background:#f4f4f6"></div>
<div class="a" style="left:47px;top:11px;width:61px;height:4px;background:#4a7cc8"></div>
<svg style="left:46px;top:15px" width="63" height="39"><defs><radialGradient id="pg" cx="0.5" cy="0.72" r="0.6"><stop offset="0" stop-color="#5f9ce6"/><stop offset="0.4" stop-color="#17418e"/><stop offset="1" stop-color="#06123c"/></radialGradient></defs><rect width="63" height="39" fill="url(#pg)"/><path d="M0 30q15-5 22-8t10-4q4 2 10 4t21 8v9H0z" fill="#143a80" opacity="0.8"/><path d="M10 30q12-6 21-9 9 3 22 9" stroke="#bfe0ff" stroke-width="1" fill="none" opacity="0.8"/><path d="M22 19a4 4 0 0 1 1-7.5 6 6 0 0 1 11-1 4.5 4.5 0 0 1 5.5 4.5 4 4 0 0 1-1.5 4z" fill="#5f9ee8" stroke="#d8f0ff" stroke-width="1"/><path d="M31 19v6" stroke="#d8f0ff" stroke-width="0.8"/></svg>
<div class="a" style="left:46px;top:54px;width:63px;height:25px;background:#5b3f93"></div>
<div class="a" style="left:50px;top:57px;width:20px;height:2px;background:#e8e0f8"></div>
<div class="a" style="left:48px;top:61px;width:22px;height:2px;background:#e8e0f8"></div>
<div class="a" style="left:52px;top:66px;width:16px;height:1px;background:#c8b8e8"></div>
<div class="a" style="left:50px;top:71px;width:18px;height:1.5px;background:#d8c8f0"></div>
<div class="a" style="left:74px;top:58px;width:28px;height:1px;background:#a898c8"></div>
<div class="a" style="left:74px;top:62px;width:26px;height:1px;background:#a898c8"></div>
<div class="a" style="left:74px;top:66px;width:24px;height:1px;background:#a898c8"></div>
<div class="a" style="left:74px;top:70px;width:28px;height:1px;background:#a898c8"></div>
<div class="a" style="left:96px;top:80px;width:10px;height:10px;border-radius:50%;background:#8fb0d8"></div>
<div class="a" style="left:48px;top:81px;width:34px;height:1.5px;background:#6a7aa8"></div>
</div>
<div class="a" style="left:953px;top:202.5px;width:25px;height:25px;border-radius:50%;background:rgba(40,40,44,0.55)"></div><svg style="left:957px;top:207px" width="17" height="16"><path d="M1.5 5.5h3l4-3.5v12l-4-3.5h-3z" fill="#ddd"/><path d="M11 5q2 3 0 6M13 3q3.5 5 0 10" stroke="#ddd" stroke-width="1.3" fill="none"/><path d="M2 1l13 14" stroke="#ddd" stroke-width="1.4"/></svg>
<div class="a" style="left:1117.3px;top:202.3px;width:25px;height:25px;border-radius:50%;background:#35373a"></div>
<svg style="left:1121.8px;top:206.8px" width="16" height="16"><path d="M6 2.2a2.2 2.2 0 0 1 4.4 0v4.3L6 2.8z" fill="#fff"/><path d="M6 5.2v2a2.2 2.2 0 0 0 3.4 1.8z" fill="#fff"/><path d="M3.5 7.5a4.7 4.7 0 0 0 7.3 3.6M12.6 8.5a4.7 4.7 0 0 0 .3-1" stroke="#fff" stroke-width="1.3" fill="none"/><path d="M8.2 12.2v3" stroke="#fff" stroke-width="1.4"/><path d="M1.5 1.5l12.5 13.5" stroke="#fff" stroke-width="1.3"/></svg>
<div class="a" style="left:1281.5px;top:202.3px;width:25px;height:25px;border-radius:50%;background:#35373a"></div>
<svg style="left:1286.0px;top:206.8px" width="16" height="16"><path d="M6 2.2a2.2 2.2 0 0 1 4.4 0v4.3L6 2.8z" fill="#fff"/><path d="M6 5.2v2a2.2 2.2 0 0 0 3.4 1.8z" fill="#fff"/><path d="M3.5 7.5a4.7 4.7 0 0 0 7.3 3.6M12.6 8.5a4.7 4.7 0 0 0 .3-1" stroke="#fff" stroke-width="1.3" fill="none"/><path d="M8.2 12.2v3" stroke="#fff" stroke-width="1.4"/><path d="M1.5 1.5l12.5 13.5" stroke="#fff" stroke-width="1.3"/></svg>
<div class="a" style="left:952.3px;top:342.3px;width:25px;height:25px;border-radius:50%;background:#35373a"></div>
<svg style="left:956.8px;top:346.8px" width="16" height="16"><path d="M6 2.2a2.2 2.2 0 0 1 4.4 0v4.3L6 2.8z" fill="#fff"/><path d="M6 5.2v2a2.2 2.2 0 0 0 3.4 1.8z" fill="#fff"/><path d="M3.5 7.5a4.7 4.7 0 0 0 7.3 3.6M12.6 8.5a4.7 4.7 0 0 0 .3-1" stroke="#fff" stroke-width="1.3" fill="none"/><path d="M8.2 12.2v3" stroke="#fff" stroke-width="1.4"/><path d="M1.5 1.5l12.5 13.5" stroke="#fff" stroke-width="1.3"/></svg>
<div class="a" style="left:1117.3px;top:342.3px;width:25px;height:25px;border-radius:50%;background:#35373a"></div>
<svg style="left:1121.8px;top:346.8px" width="16" height="16"><path d="M6 2.2a2.2 2.2 0 0 1 4.4 0v4.3L6 2.8z" fill="#fff"/><path d="M6 5.2v2a2.2 2.2 0 0 0 3.4 1.8z" fill="#fff"/><path d="M3.5 7.5a4.7 4.7 0 0 0 7.3 3.6M12.6 8.5a4.7 4.7 0 0 0 .3-1" stroke="#fff" stroke-width="1.3" fill="none"/><path d="M8.2 12.2v3" stroke="#fff" stroke-width="1.4"/><path d="M1.5 1.5l12.5 13.5" stroke="#fff" stroke-width="1.3"/></svg>
<div class="a" style="left:1281.5px;top:342.3px;width:25px;height:25px;border-radius:50%;background:#35373a"></div>
<svg style="left:1286.0px;top:346.8px" width="16" height="16"><path d="M6 2.2a2.2 2.2 0 0 1 4.4 0v4.3L6 2.8z" fill="#fff"/><path d="M6 5.2v2a2.2 2.2 0 0 0 3.4 1.8z" fill="#fff"/><path d="M3.5 7.5a4.7 4.7 0 0 0 7.3 3.6M12.6 8.5a4.7 4.7 0 0 0 .3-1" stroke="#fff" stroke-width="1.3" fill="none"/><path d="M8.2 12.2v3" stroke="#fff" stroke-width="1.4"/><path d="M1.5 1.5l12.5 13.5" stroke="#fff" stroke-width="1.3"/></svg>
<div class="a" style="left:952.3px;top:482.3px;width:25px;height:25px;border-radius:50%;background:#35373a"></div>
<svg style="left:956.8px;top:486.8px" width="16" height="16"><path d="M6 2.2a2.2 2.2 0 0 1 4.4 0v4.3L6 2.8z" fill="#fff"/><path d="M6 5.2v2a2.2 2.2 0 0 0 3.4 1.8z" fill="#fff"/><path d="M3.5 7.5a4.7 4.7 0 0 0 7.3 3.6M12.6 8.5a4.7 4.7 0 0 0 .3-1" stroke="#fff" stroke-width="1.3" fill="none"/><path d="M8.2 12.2v3" stroke="#fff" stroke-width="1.4"/><path d="M1.5 1.5l12.5 13.5" stroke="#fff" stroke-width="1.3"/></svg>
<div class="a" style="left:1281.5px;top:482.3px;width:25px;height:25px;border-radius:50%;background:#35373a"></div>
<svg style="left:1286.0px;top:486.8px" width="16" height="16"><path d="M6 2.2a2.2 2.2 0 0 1 4.4 0v4.3L6 2.8z" fill="#fff"/><path d="M6 5.2v2a2.2 2.2 0 0 0 3.4 1.8z" fill="#fff"/><path d="M3.5 7.5a4.7 4.7 0 0 0 7.3 3.6M12.6 8.5a4.7 4.7 0 0 0 .3-1" stroke="#fff" stroke-width="1.3" fill="none"/><path d="M8.2 12.2v3" stroke="#fff" stroke-width="1.4"/><path d="M1.5 1.5l12.5 13.5" stroke="#fff" stroke-width="1.3"/></svg>
<div class="a" style="left:1056px;top:228.5px;width:46px;height:46px;border-radius:50%;background:#6aa534"></div>
<div class="a" style="left:1221.6px;top:228.5px;width:46px;height:46px;border-radius:50%;background:#c5431b"></div>
<div class="a" style="left:891.3px;top:509.1px;width:46px;height:46px;border-radius:50%;background:#5b32b4"></div>
<div class="a" style="left:1052px;top:502.8px;width:30px;height:30px;border-radius:50%;background:#673c31"></div>
<div class="a" style="left:1080px;top:502.8px;width:30px;height:30px;border-radius:50%;background:#445b67;box-shadow:-1px 0 0 #3c4043"></div>
<svg style="left:890.8px;top:368.8px;filter:blur(0.4px)" width="46" height="46"><defs><clipPath id="cb"><circle cx="23" cy="23" r="23"/></clipPath><linearGradient id="sky" x1="0" y1="0" x2="0" y2="1"><stop offset="0" stop-color="#ece0d0"/><stop offset="1" stop-color="#e8b888"/></linearGradient></defs><g clip-path="url(#cb)"><rect width="46" height="46" fill="url(#sky)"/><path d="M0 14h46v6H0z" fill="#4a5a3a"/><path d="M0 17h46v6H0z" fill="#3a4630"/><rect x="0" y="21" width="46" height="25" fill="#c9c6c0"/><path d="M0 22h46v3H0z" fill="#9aa090"/><path d="M46 20L46 25Q28 26 20 34T4 46H-2Q8 36 16 28T46 20z" fill="#b86a30"/><path d="M0 23q6 2 10 4l-6 19H0z" fill="#6a7a60"/><circle cx="15.5" cy="10.5" r="2.2" fill="#1a1614"/><path d="M13 13h5v8h-5z" fill="#1e1e20"/><path d="M14 21l4 .5 2.5 6-1.5.5-3-4.5-2 .5z" fill="#2a2a2e"/></g></svg>
<svg style="left:1056.6px;top:369px;filter:blur(0.45px)" width="46" height="46"><defs><clipPath id="cl"><circle cx="23" cy="23" r="22.8"/></clipPath><linearGradient id="lsky" x1="0" y1="0" x2="0" y2="1"><stop offset="0" stop-color="#a9acae"/><stop offset="1" stop-color="#7d8286"/></linearGradient></defs><g clip-path="url(#cl)"><rect width="46" height="25" fill="url(#lsky)"/><rect y="21" width="46" height="4" fill="#5a5650"/><rect y="25" width="46" height="21" fill="#6e5e3e"/><ellipse cx="22" cy="17" rx="7" ry="8.5" fill="#2a2420"/><ellipse cx="22.5" cy="20" rx="5" ry="6.5" fill="#9a7460"/><path d="M5 46q1-14 9-17 4-2 9-2t9 2q8 3 9 17z" fill="#55482a"/><path d="M16 28q6 3 13 0l1 18H15z" fill="#181818"/><path d="M20 36h5v4h-5z" fill="#d0d0d0"/></g></svg>
<svg style="left:1221.4px;top:369.4px;filter:blur(0.45px)" width="46" height="46"><defs><clipPath id="cv"><circle cx="23" cy="23" r="22.8"/></clipPath></defs><g clip-path="url(#cv)"><rect width="46" height="46" fill="#eceeee"/><rect x="34" width="12" height="46" fill="#d6dcdc"/><path d="M10 40q-3-15 1-25 4-11 12-11t12 11q3 10 0 25z" fill="#4a3a30"/><ellipse cx="22.5" cy="22" rx="6" ry="8" fill="#b99a88"/><path d="M16 21h13" stroke="#2a2a2a" stroke-width="1.6"/><path d="M5 46q2-10 8-12 5-2 10-2t10 2q6 2 8 12z" fill="#283a5a"/><path d="M18 33h9l1 13H17z" fill="#5a64b8"/></g></svg>
<svg style="left:1221.4px;top:509.8px;filter:blur(0.45px)" width="46" height="46"><defs><clipPath id="cm"><circle cx="23" cy="23" r="22.7"/></clipPath></defs><g clip-path="url(#cm)"><rect width="46" height="46" fill="#b8c4b0"/><rect width="46" height="11" fill="#4a4846"/><rect y="11" width="14" height="20" fill="#9ccf78"/><rect x="32" y="11" width="14" height="20" fill="#d8e0ea"/><rect x="38" y="20" width="8" height="10" fill="#d03a3a"/><ellipse cx="23" cy="19" rx="7.5" ry="9" fill="#b88868"/><path d="M15 21q1 9 8 10 7-1 8-10-2 4-8 4t-8-4z" fill="#6a4028"/><path d="M2 46q1-12 9-15 6-2 12-2t12 2q8 3 9 15z" fill="#3e4a32"/><path d="M20 31h6v15h-6z" fill="#2a4a5a"/></g></svg>
<div class="t" style="left:854.7px;top:286.0px;font-size:15.20px;letter-spacing:-0.02px;color:#ffffff;text-shadow:0 0 2px rgba(0,0,0,0.6);-webkit-text-stroke:0.35px #ffffff;">Marius Iulian Mi...</div>
<div class="t" style="left:1019.8px;top:286.0px;font-size:15.20px;letter-spacing:-0.35px;color:#ffffff;-webkit-text-stroke:0.35px #ffffff;">FCC Ev P 3 Wor...</div>
<div class="t" style="left:1185.0px;top:286.0px;font-size:15.20px;letter-spacing:0.07px;color:#ffffff;-webkit-text-stroke:0.35px #ffffff;">Sava Alexandru</div>
<div class="t" style="left:854.7px;top:426.6px;font-size:15.20px;letter-spacing:0.06px;color:#ffffff;-webkit-text-stroke:0.35px #ffffff;">Boboc Alexand...</div>
<div class="t" style="left:1019.8px;top:426.6px;font-size:15.20px;letter-spacing:0.34px;color:#ffffff;-webkit-text-stroke:0.35px #ffffff;">Lorenț Andrei-...</div>
<div class="t" style="left:1185.0px;top:426.6px;font-size:15.20px;letter-spacing:0.01px;color:#ffffff;-webkit-text-stroke:0.35px #ffffff;">Valentina Mara...</div>
<div class="t" style="left:854.7px;top:566.3px;font-size:15.20px;letter-spacing:0.12px;color:#ffffff;-webkit-text-stroke:0.35px #ffffff;">Munteanu Ionela</div>
<div class="t" style="left:1054.6px;top:546.5px;font-size:14.60px;letter-spacing:0.08px;color:#e8eaed;-webkit-text-stroke:0.35px #e8eaed;">Încă 11</div>
<div class="t" style="left:1185.0px;top:566.3px;font-size:15.20px;letter-spacing:0.00px;color:#ffffff;-webkit-text-stroke:0.35px #ffffff;">Marius Iulian M...</div>
<div class="t" style="left:1072.2px;top:240.0px;font-size:24.06px;color:#ffffff;">F</div>
<div class="t" style="left:1236.6px;top:240.0px;font-size:23.99px;color:#ffffff;">S</div>
<div class="t" style="left:904.3px;top:520.5px;font-size:24.01px;color:#ffffff;">M</div>
<div class="t" style="left:1061.1px;top:509.0px;font-size:18.59px;color:#f0e6e0;">S</div>
<div class="t" style="left:1089.5px;top:509.3px;font-size:18.01px;color:#e6eef0;">F</div>
<!-- bottom bar -->
<div class="a" style="left:19px;top:654px;font-size:16px;color:#e8eaed;-webkit-text-stroke:0.4px #e8eaed;white-space:nowrap;line-height:19px">17:30</div>
<div class="a" style="left:72px;top:654px;width:1px;height:17px;background:#9aa0a6"></div>
<div class="a" style="left:86px;top:653px;font-size:17px;color:#e8eaed;white-space:nowrap;line-height:19px;-webkit-text-stroke:0.35px #e8eaed;letter-spacing:0.9px">rqo-nurr-oxp</div>
<div class="a" style="left:444.5px;top:641.5px;width:42px;height:42px;border-radius:50%;background:#ea4335"></div>
<div class="a" style="left:499px;top:641.5px;width:42px;height:42px;border-radius:50%;background:#ea4335"></div>
<div class="a" style="left:554px;top:641.5px;width:42px;height:42px;border-radius:50%;background:#3c4043"></div>
<div class="a" style="left:608px;top:641.5px;width:42px;height:42px;border-radius:50%;background:#3c4043"></div>
<div class="a" style="left:663px;top:641.5px;width:42px;height:42px;border-radius:50%;background:#3c4043"></div>
<div class="a" style="left:717.5px;top:641.5px;width:42px;height:42px;border-radius:50%;background:#3c4043"></div>
<div class="a" style="left:772px;top:641.5px;width:42px;height:42px;border-radius:50%;background:#3c4043"></div>
<div class="a" style="left:827px;top:641.5px;width:59px;height:42px;border-radius:21px;background:#ea4335"></div>
<!-- BOTTOMICONS -->

<svg style="left:456px;top:653px" width="20" height="20"><path d="M8.3 1.5a2.2 2.2 0 0 1 4.4 0.3V8.8L8.3 4.4z" fill="#fff"/><path d="M8.3 6.8V9a2.2 2.2 0 0 0 3.3 1.9z" fill="#fff"/><path d="M4.2 8.3a6.3 6.3 0 0 0 9.3 5.5M15.8 10.5q.5-1 .6-2.2" stroke="#fff" stroke-width="1.7" fill="none"/><path d="M10.3 14.5v3.5" stroke="#fff" stroke-width="1.8"/><path d="M1.5 1.5L17.5 18.5" stroke="#fff" stroke-width="1.7"/></svg>
<svg style="left:505px;top:648px" width="30" height="28"><path d="M10.5 8H20.5V12.5" stroke="#fff" stroke-width="2" fill="none"/><path d="M7.3 8.5V20.5H19.5" stroke="#fff" stroke-width="2" fill="none"/><path d="M20 13.5L24 10.2V18.5L20 15.5z" fill="#fff"/><path d="M7.5 7.3L22 23" stroke="#fff" stroke-width="2"/></svg>
<svg style="left:563px;top:652px" width="23" height="21"><rect x="2.5" y="2.8" width="18.5" height="15.2" rx="0.8" stroke="#fff" stroke-width="2" fill="none"/><path d="M10.3 8.6A2.6 2.6 0 1 0 10.3 12.2" stroke="#fff" stroke-width="2.1" fill="none"/><path d="M16.6 8.6A2.6 2.6 0 1 0 16.6 12.2" stroke="#fff" stroke-width="2.1" fill="none"/></svg>
<svg style="left:618px;top:651px" width="23" height="23"><circle cx="11.5" cy="11.5" r="9.5" stroke="#fff" stroke-width="1.9" fill="none"/><circle cx="8.2" cy="9" r="1.4" fill="#fff"/><circle cx="14.8" cy="9" r="1.4" fill="#fff"/><path d="M6.5 12.5h10a5 5 0 0 1-10 0z" fill="#fff"/></svg>
<svg style="left:671px;top:652px" width="26" height="22"><rect x="2.3" y="1.9" width="21.3" height="17.6" rx="1.2" stroke="#fff" stroke-width="2.1" fill="none"/><path d="M13 15.5V9.5" stroke="#fff" stroke-width="2"/><path d="M9.2 10.6L13 6.8l3.8 3.8z" fill="#fff"/></svg>
<svg style="left:726px;top:649.5px;overflow:visible" width="24" height="27"><g transform="scale(1.07)"><path d="M6 12.5V5.5a1.5 1.5 0 0 1 3 0v5.5M9 10.5V3a1.5 1.5 0 0 1 3 0v7.5M12 10.5V3.5a1.5 1.5 0 0 1 3 0v7.5M15 11V6a1.5 1.5 0 0 1 3 0v9q0 7.5-7 7.5-3.5 0-5.5-3L2.5 14.5a1.5 1.5 0 0 1 2.3-2L6.5 14" stroke="#fff" stroke-width="1.7" fill="none" stroke-linejoin="round"/></g></svg>
<svg style="left:789px;top:652px" width="8" height="22"><circle cx="4" cy="3.5" r="2.2" fill="#fff"/><circle cx="4" cy="10.5" r="2.2" fill="#fff"/><circle cx="4" cy="17.5" r="2.2" fill="#fff"/></svg>
<svg style="left:842px;top:654px" width="30" height="16"><g transform="translate(15 7.5) scale(1.08 1.15) translate(-13 -7.5)"><path d="M13 3q-7 0-11 3.5q-.8.8 0 1.6l2.4 2.6q.8.8 1.6 0l2.3-2q.5-.5.5-1.2V5.2q2.2-.6 4.2-.6t4.2.6v2.3q0 .7.5 1.2l2.3 2q.8.8 1.6 0L24 8.1q.8-.8 0-1.6-4-3.5-11-3.5z" fill="#fff"/></g></svg>
<!-- right icons -->
<svg style="left:1086px;top:651px" width="23" height="23"><circle cx="11.5" cy="11.5" r="9.8" stroke="#fff" stroke-width="1.9" fill="none"/><path d="M11.5 10v6.5" stroke="#fff" stroke-width="2.2"/><circle cx="11.5" cy="7" r="1.4" fill="#fff"/></svg>
<svg style="left:1132px;top:648px" width="32" height="28"><circle cx="12.8" cy="10.4" r="3.5" stroke="#fff" stroke-width="2.6" fill="none"/><path d="M18.2 5.6A4.8 4.8 0 0 1 18.2 15.2A7.5 7.5 0 0 0 18.2 5.6z" fill="#fff"/><path d="M5.3 21.8V20.5q0-3.5 7.6-3.5t7.6 3.5v1.3z" stroke="#fff" stroke-width="2.5" fill="none" stroke-linejoin="round"/><path d="M22.2 15.8q6 .8 6 4.5V23h-5.6v-2.5q0-2.8-1.8-4.2z" fill="#fff"/></svg>
<div class="a" style="left:1149.5px;top:628.5px;width:30px;height:20.5px;border-radius:10.5px;background:#5f6368"></div>
<div class="t" style="left:1156.5px;top:633px;font-size:12.5px;color:#fff;letter-spacing:0.3px">20</div>
<svg style="left:1187px;top:651px" width="23" height="23"><path d="M2 2h19v15H5.5L2 21z" stroke="#fff" stroke-width="1.9" fill="none" stroke-linejoin="round"/><path d="M5.5 6h12M5.5 9.5h12M5.5 13h8" stroke="#fff" stroke-width="1.9"/></svg>
<svg style="left:1238px;top:651px" width="23" height="23"><path d="M10.5 1.5L15 9H6z" stroke="#fff" stroke-width="1.9" fill="none" stroke-linejoin="round"/><rect x="1.5" y="12.5" width="8" height="8" stroke="#fff" stroke-width="1.9" fill="none"/><circle cx="17" cy="16.5" r="4" stroke="#fff" stroke-width="1.9" fill="none"/></svg>
<svg style="left:1289px;top:650px" width="24" height="25"><path d="M5 9.5V6.5a5 5 0 0 1 10 0v3" stroke="#fff" stroke-width="1.9" fill="none"/><path d="M12 22H2.5V9.5h14.5v3" stroke="#fff" stroke-width="1.9" fill="none"/><circle cx="17.3" cy="18" r="5.2" fill="#fff"/><circle cx="17.3" cy="16.3" r="1.4" fill="#202124"/><path d="M14.6 21q.5-2.3 2.7-2.3t2.7 2.3" fill="#202124"/></svg>

<div id="taskbar" class="a"></div>
<!-- TASKBAR -->

<div class="a" style="left:0;top:704px;width:1338px;height:1px;background:#3b3b3c"></div>
<!-- windows -->
<svg style="left:15px;top:718px" width="25" height="25"><defs><linearGradient id="wg" x1="0" y1="0" x2="1" y2="1"><stop offset="0" stop-color="#5fd8ff"/><stop offset="1" stop-color="#1a9de8"/></linearGradient></defs><rect x="0" y="0" width="11.8" height="11.8" rx="1" fill="url(#wg)"/><rect x="12.7" y="0" width="11.8" height="11.8" rx="1" fill="url(#wg)"/><rect x="0" y="12.7" width="11.8" height="11.8" rx="1" fill="url(#wg)"/><rect x="12.7" y="12.7" width="11.8" height="11.8" rx="1" fill="url(#wg)"/></svg>
<!-- task view -->
<div class="a" style="left:61px;top:723.5px;width:19px;height:19px;background:#5a5a5a;border-radius:2px"></div>
<div class="a" style="left:68px;top:718px;width:19px;height:17px;background:#e8e8e8;border-radius:2px"></div>
<div class="a" style="left:68px;top:723.5px;width:12px;height:11.5px;background:#9a9a9a"></div>
<!-- weather -->
<svg style="left:107px;top:716px" width="28" height="28"><path d="M6 4a6 6 0 0 0 8 8 6 6 0 1 1-8-8z" fill="#f5b63c"/><path d="M4 25q-3.5 0-3.5-3.5T4 18q.5-4.5 5-4.5 3 0 4.5 2.5 1-.8 2.5-.8 3.5 0 4 3.5 4 .2 4 3.6T20.5 25z" fill="#b9d4f0"/><path d="M4 25q-3.5 0-3.5-3.5h24q0 3.5-4 3.5z" fill="#9cc0e8"/></svg>
<div class="a" style="left:120px;top:712.5px;width:16.5px;height:16.5px;border-radius:50%;background:#f2a6b6"></div>
<div class="t" style="left:125.5px;top:715.5px;font-size:10.5px;color:#202020">1</div>
<!-- teams -->
<svg style="left:153px;top:717px" width="26" height="26"><path d="M13 1a12 12 0 1 1-6.2 22.3L1.5 25l1.8-5A12 12 0 0 1 13 1z" fill="#7b68ee"/><path d="M13 1a12 12 0 1 1-6.2 22.3L1.5 25l1.8-5A12 12 0 0 1 13 1z" fill="url(#tg)"/><defs><linearGradient id="tg" x1="0" y1="0" x2="1" y2="1"><stop offset="0" stop-color="#8a7df0"/><stop offset="1" stop-color="#5a4fc8"/></linearGradient></defs><rect x="6.5" y="9" width="9" height="8" rx="1.5" fill="#fff"/><path d="M16 12l4-2.5v7L16 14z" fill="#fff"/></svg>
<!-- files -->
<svg style="left:199px;top:717px" width="27" height="24"><path d="M1 3.5q0-1.5 1.5-1.5h7l2.5 2.5h13q1.5 0 1.5 1.5v2H1z" fill="#e8a820"/><rect x="1" y="6" width="25.5" height="17" rx="1" fill="#f9d35a"/><rect x="8" y="15" width="12" height="8" rx="1" fill="#1a7ad4"/></svg>
<!-- person -->
<svg style="left:248px;top:716px" width="22" height="27"><path d="M4 7q0-6 7-6t7 6v1H4z" fill="#303a6a"/><circle cx="11" cy="10.5" r="5" fill="#b07d52"/><path d="M1 27q0-9 10-9t10 9z" fill="#303a6a"/><path d="M9 18l2 4 2-4z" fill="#e0e0e0"/></svg>
<!-- telegram -->
<svg style="left:293px;top:717px" width="24" height="24"><circle cx="12" cy="12" r="11.5" fill="#2aa3e0"/><path d="M5 11.5l12.5-5q1-.3.8.8l-2.2 10.5q-.3 1-1.2.5l-3.3-2.5-1.6 1.6q-.3.3-.6 0l.3-3.4 6-5.5-7.5 4.5-3.1-1q-.9-.3.1-.5z" fill="#fff"/></svg>
<!-- whatsapp -->
<svg style="left:338px;top:716px" width="27" height="27"><path d="M13.5 1.5a11.5 11.5 0 0 0-10 17.2L1.5 25.5l7-1.8A11.5 11.5 0 1 0 13.5 1.5z" fill="#fff"/><path d="M13.5 3.5a9.5 9.5 0 0 0-8 14.6l-1.2 4.5 4.5-1.2A9.5 9.5 0 1 0 13.5 3.5z" fill="#25d366"/><path d="M9.5 8.5q1-.8 1.5 0l1 2.3q.2.6-.3 1l-.7.7q1.5 2.8 4.2 4.2l.8-.8q.4-.4 1-.2l2.2 1q.8.5 0 1.6-1.2 1.5-3 .9-5.5-2-7.5-7.3-.5-1.8.8-3.4z" fill="#fff"/></svg>
<div class="a" style="left:351px;top:712.5px;width:20.5px;height:17px;border-radius:8.5px;background:#d6a6e6"></div>
<div class="t" style="left:354px;top:715.5px;font-size:10.5px;color:#202020">12</div>
<!-- discord -->
<svg style="left:384px;top:717px" width="26" height="26"><circle cx="13" cy="13" r="12.8" fill="#5865f2"/><path d="M7.5 8.5q2.5-1.3 3.8-1.3l.4.7q1.3-.2 2.6 0l.4-.7q1.3 0 3.8 1.3 1.8 3.5 1.6 8.3-1.8 1.3-3.5 1.7l-.8-1.3q.8-.3 1.3-.7l-.3-.2q-3.8 1.7-7.6 0l-.3.2q.5.4 1.3.7l-.8 1.3q-1.7-.4-3.5-1.7-.2-4.8 1.6-8.3z" fill="#fff"/><ellipse cx="10.6" cy="13.3" rx="1.2" ry="1.4" fill="#5865f2"/><ellipse cx="15.4" cy="13.3" rx="1.2" ry="1.4" fill="#5865f2"/></svg>
<!-- chrome -->
<svg style="left:430px;top:717px" width="26" height="26"><circle cx="13" cy="13" r="12.5" fill="#db4437"/><path d="M13 13L2.2 19.3A12.5 12.5 0 0 0 19.3 23.8z" fill="#0f9d58"/><path d="M13 13L24.8 9A12.5 12.5 0 0 1 19.3 23.8z" fill="#ffcd40"/><path d="M13 13H24.8A12.5 12.5 0 0 0 24 8.5z" fill="#db4437"/><circle cx="13" cy="13" r="5.8" fill="#fff"/><circle cx="13" cy="13" r="4.6" fill="#4285f4"/></svg>
<!-- firefox active -->
<div class="a" style="left:474px;top:709px;width:37px;height:42px;border-radius:4px;border:1px solid #3b3d3f"></div><div class="a" style="left:469px;top:709px;width:37px;height:42px;background:#2d2f31;border-radius:4px;border:1px solid #3b3d3f"></div>
<svg style="left:477px;top:716px" width="26" height="26"><defs><linearGradient id="ffg" x1="0.8" y1="0" x2="0.3" y2="1"><stop offset="0" stop-color="#fff44f"/><stop offset="0.35" stop-color="#ffa436"/><stop offset="0.7" stop-color="#ff4a3a"/><stop offset="1" stop-color="#e31587"/></linearGradient></defs><path d="M13 24.5A11.3 11.3 0 0 1 2 13.5q0-3.5 2-6.5l1 2.5q.5-2 2-3.5.3 2 1.5 2.5 1.5-1 3.5-1.2L10 10q-1 .5-1 2.5A4.5 4.5 0 1 0 17.5 10Q16 7 13 6.5q2-3 2.5-6 3.5 1.5 5.5 4.5 3.3 4 3.3 8.5A11.3 11.3 0 0 1 13 24.5z" fill="url(#ffg)"/><circle cx="13" cy="13" r="5" fill="#7542e5"/><circle cx="12.3" cy="12" r="3.2" fill="#9059ff"/><path d="M6.5 9.5q2.5-1 5 .5-3 .5-3.5 3-1.5-1.5-1.5-3.5z" fill="#ff980e"/></svg>
<div class="a" style="left:481px;top:747px;width:16.5px;height:2.5px;border-radius:1.5px;background:#e0a8f0"></div>
<!-- todo -->
<svg style="left:522px;top:718px" width="27" height="24"><path d="M1 13l4.5-4.5 5.5 5.5L22 3l4.5 4.5L11 23z" fill="#2564cf"/><path d="M11 14L22 3l4.5 4.5L11 23z" fill="#5fa8ff"/></svg>
<div class="a" style="left:537.5px;top:712.5px;width:17px;height:17px;border-radius:50%;background:#d6a6e6"></div>
<div class="t" style="left:543px;top:715.5px;font-size:10.5px;color:#202020">2</div>
<!-- snipping -->
<svg style="left:570px;top:716px" width="27" height="27"><rect x="1" y="2" width="18" height="18" rx="1.5" fill="#f0f0f0"/><rect x="3.5" y="4.5" width="13" height="13" fill="none" stroke="#d8333a" stroke-width="2" stroke-dasharray="2.5 1.5"/><circle cx="17" cy="23" r="3" fill="none" stroke="#2b6cd6" stroke-width="1.6"/><circle cx="24" cy="19" r="3" fill="none" stroke="#2b6cd6" stroke-width="1.6"/><path d="M18.5 21L14 14M22 18l-8-4" stroke="#7a7a7a" stroke-width="1.2"/></svg>
<!-- skype -->
<svg style="left:616px;top:717px" width="25" height="25"><circle cx="12.5" cy="12.5" r="11.8" fill="#1da1e8"/><circle cx="6.5" cy="6.5" r="5.5" fill="#1da1e8"/><circle cx="18.5" cy="18.5" r="5.5" fill="#1da1e8"/><path d="M16.5 8.5q-1-1.8-4-1.8-3.8 0-3.8 2.8 0 2 3.5 2.8 3.5.8 3.5 2.3 0 1.5-2.5 1.5-2.5 0-3.5-2" stroke="#fff" stroke-width="2.4" fill="none" stroke-linecap="round"/></svg>
<!-- acrobat -->
<div class="a" style="left:663px;top:717px;width:24px;height:24px;background:#b30b00;border-radius:3px"></div>
<svg style="left:666px;top:720px" width="18" height="18"><path d="M2.5 15q2-3.5 5-9.5-.8-3.5.5-3.5t.5 3.5q2 4.5 6.5 6 2.2 0 1.8 1-.5 1-3.8-.5Q9 12 4.5 14q-1.5 2.5-2 1z" stroke="#fff" stroke-width="1.3" fill="none"/></svg>
<div class="a" style="left:671px;top:747px;width:8px;height:2.5px;border-radius:1.5px;background:#9a9a9a"></div>
<!-- obs -->
<svg style="left:708px;top:717px" width="25" height="25"><circle cx="12.5" cy="12.5" r="11.5" fill="#302e31" stroke="#e8e8e8" stroke-width="1.3"/><circle cx="12.5" cy="7.2" r="4" fill="none" stroke="#e8e8e8" stroke-width="1.3"/><circle cx="7.8" cy="15.2" r="4" fill="none" stroke="#e8e8e8" stroke-width="1.3"/><circle cx="17.2" cy="15.2" r="4" fill="none" stroke="#e8e8e8" stroke-width="1.3"/></svg>
<div class="a" style="left:724px;top:713px;width:15px;height:15px;border-radius:50%;background:#e81123"></div>
<div class="a" style="left:717px;top:747px;width:8px;height:2.5px;border-radius:1.5px;background:#9a9a9a"></div>
<!-- tray -->
<svg style="left:1030px;top:725px" width="13" height="9"><path d="M1 7.5L6.5 2 12 7.5" stroke="#fff" stroke-width="1.4" fill="none"/></svg>
<svg style="left:1063px;top:721px" width="15" height="18"><rect x="4.5" y="1" width="6" height="10.5" rx="3" stroke="#c9a0dc" stroke-width="1.3" fill="none"/><path d="M1.8 8.5a5.7 5.7 0 0 0 11.4 0M7.5 14.5v3" stroke="#c9a0dc" stroke-width="1.3" fill="none"/></svg>
<svg style="left:1141px;top:722px" width="19" height="15"><path d="M1 5.5q8.5-7 17 0M3.5 8.2q6-4.8 12 0M6 10.8q3.5-2.5 7 0" stroke="#fff" stroke-width="1.4" fill="none"/><circle cx="9.5" cy="13" r="1.3" fill="#fff"/></svg>
<svg style="left:1166px;top:722px" width="18" height="16"><path d="M1.5 5.5h3l4.5-4v13l-4.5-4h-3z" stroke="#fff" stroke-width="1.2" fill="none" stroke-linejoin="round"/><path d="M11.5 5.5l5 5M16.5 5.5l-5 5" stroke="#fff" stroke-width="1.2"/></svg>
<svg style="left:1191px;top:721px" width="19" height="17"><rect x="1" y="5" width="15" height="10" rx="2" stroke="#fff" stroke-width="1.3" fill="none"/><rect x="16.5" y="8" width="1.8" height="4" fill="#fff"/><path d="M2.5 13.5v-5l6-2 5 1.5v5.5z" fill="#fff" opacity="0.9"/><path d="M6 1l-2.5 5h3L4.5 10" stroke="#fff" stroke-width="1.2" fill="none"/></svg>
<svg style="left:1300px;top:721px" width="16" height="18"><path d="M8 1.5a5 5 0 0 1 5 5v4.5l2 3H1l2-3V6.5a5 5 0 0 1 5-5z" stroke="#fff" stroke-width="1.3" fill="none" stroke-linejoin="round"/><path d="M5.8 15a2.2 2.2 0 0 0 4.4 0" stroke="#fff" stroke-width="1.3" fill="none"/></svg>
<div class="a" style="left:1336px;top:88px;width:2px;height:666px;background:#141416"></div>
<div class="t" style="left:1098.0px;top:725.4px;font-size:11.21px;color:#ffffff;">ENG</div>
<div class="t" style="left:1246.6px;top:715.7px;font-size:12.03px;color:#ffffff;">5:30 PM</div>
<div class="t" style="left:1227.0px;top:732.0px;font-size:13.06px;color:#ffffff;">11/27/2023</div>
</body></html>
